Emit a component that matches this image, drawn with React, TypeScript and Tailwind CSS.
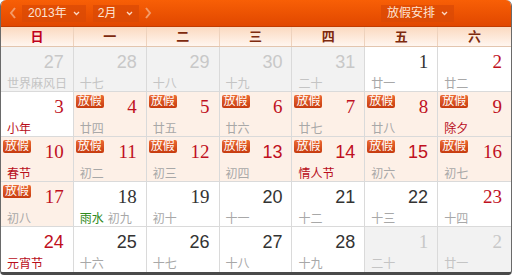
import React from 'react';

// Lunar calendar month view — Feb 2013 with holiday markers.

type Cell = {
  d: number;
  lunar: string;
  other?: boolean;   // outside current month
  holiday?: boolean; // 放假 badge + peach bg
  red?: boolean;     // weekend / holiday number colour
  fest?: boolean;    // lunar text shown as festival (red)
  term?: string;     // solar term (green)
  serif?: boolean;
};

const ROWS: Cell[][] = [
  [
    { d: 27, lunar: '世界麻风日', other: true },
    { d: 28, lunar: '十七', other: true },
    { d: 29, lunar: '十八', other: true },
    { d: 30, lunar: '十九', other: true },
    { d: 31, lunar: '二十', other: true },
    { d: 1, lunar: '廿一', serif: true },
    { d: 2, lunar: '廿二', red: true, serif: true },
  ],
  [
    { d: 3, lunar: '小年', red: true, fest: true, serif: true },
    { d: 4, lunar: '廿四', holiday: true, red: true, serif: true },
    { d: 5, lunar: '廿五', holiday: true, red: true, serif: true },
    { d: 6, lunar: '廿六', holiday: true, red: true, serif: true },
    { d: 7, lunar: '廿七', holiday: true, red: true, serif: true },
    { d: 8, lunar: '廿八', holiday: true, red: true, serif: true },
    { d: 9, lunar: '除夕', holiday: true, red: true, fest: true, serif: true },
  ],
  [
    { d: 10, lunar: '春节', holiday: true, red: true, fest: true, serif: true },
    { d: 11, lunar: '初二', holiday: true, red: true, serif: true },
    { d: 12, lunar: '初三', holiday: true, red: true, serif: true },
    { d: 13, lunar: '初四', holiday: true, red: true },
    { d: 14, lunar: '情人节', holiday: true, red: true, fest: true },
    { d: 15, lunar: '初六', holiday: true, red: true },
    { d: 16, lunar: '初七', holiday: true, red: true, serif: true },
  ],
  [
    { d: 17, lunar: '初八', holiday: true, red: true, serif: true },
    { d: 18, lunar: '初九', term: '雨水', serif: true },
    { d: 19, lunar: '初十', serif: true },
    { d: 20, lunar: '十一' },
    { d: 21, lunar: '十二' },
    { d: 22, lunar: '十三' },
    { d: 23, lunar: '十四', red: true, serif: true },
  ],
  [
    { d: 24, lunar: '元宵节', red: true, fest: true },
    { d: 25, lunar: '十六' },
    { d: 26, lunar: '十七' },
    { d: 27, lunar: '十八' },
    { d: 28, lunar: '十九' },
    { d: 1, lunar: '二十', other: true, serif: true },
    { d: 2, lunar: '廿一', other: true, serif: true },
  ],
];

const WEEK = ['日', '一', '二', '三', '四', '五', '六'];

const Chevron: React.FC = () => (
  <svg width="7" height="5" viewBox="0 0 7 5" className="ml-[6px] shrink-0">
    <path d="M1 1 L3.5 3.5 L6 1" fill="none" stroke="#fcd9c4" strokeWidth="1.3" />
  </svg>
);

const Arrow: React.FC<{ left?: boolean }> = ({ left }) => (
  <svg width="8" height="12" viewBox="0 0 8 12" className="shrink-0">
    <path d={left ? 'M6 1 L2 6 L6 11' : 'M2 1 L6 6 L2 11'} fill="none" stroke="#f39a68" strokeWidth="2" />
  </svg>
);

const Dropdown: React.FC<{ label: string; className?: string }> = ({ label, className = '' }) => (
  <div className={`h-[17px] flex items-center whitespace-nowrap bg-[#d94806]/70 text-[12px] leading-none text-[#fde3d2] ${className}`}>
    {label}
    <Chevron />
  </div>
);

const DayCell: React.FC<{ c: Cell; last: boolean; bottom: boolean }> = ({ c, last, bottom }) => {
  const bg = c.other ? 'bg-[#f2f2f2]' : c.holiday ? 'bg-[#fdf0e7]' : 'bg-white';
  const num = c.other ? 'text-[#c8c8c8]' : c.red ? 'text-[#c0101e]' : 'text-[#333333]';
  const face = c.serif ? 'font-["Liberation_Serif",serif] text-[19px]' : 'text-[18px]';
  const lunarColor = c.other ? 'text-[#c4c4c4]' : c.fest ? 'text-[#b80d1a]' : 'text-[#a8a8a8]';
  return (
    <div className={`relative h-[45px] ${bg} ${last ? '' : 'border-r border-[#dadada]'} ${bottom ? '' : 'border-b border-[#dadada]'}`}>
      {c.holiday && (
        <span className="absolute top-[3px] left-[2px] h-[13px] px-[2px] rounded-[2px] bg-gradient-to-b from-[#ec6a32] to-[#c63a0e] text-white text-[12px] leading-[13px]">
          放假
        </span>
      )}
      <div className={`flex justify-end pr-[9px] pt-[5px] leading-[20px] ${num} ${face}`}>{c.d}</div>
      <div className={`pl-[6px] mt-[4px] text-[12px] leading-[16px] whitespace-nowrap ${lunarColor}`}>
        {c.term && <span className="text-[#2f8a1c] mr-[4px]">{c.term}</span>}
        {c.lunar}
      </div>
    </div>
  );
};

export default function App() {
  return (
    <div className="w-[512px] h-[275px] bg-white font-['Liberation_Sans','Noto_Sans_CJK_SC',sans-serif]">
      <div className="w-[512px] h-[275px] rounded-t-[6px] rounded-b-[4px] overflow-hidden border-x border-[#6a6a6a] border-b-[3px] border-b-[#4a4a4a]">
        {/* top bar */}
        <div className="h-[27px] flex items-center bg-gradient-to-b from-[#f85f06] to-[#e14700] border-b border-[#c23b00] pl-[8px] pr-[57px]">
          <Arrow left />
          <Dropdown label="2013年" className="ml-[5px] pl-[6px] pr-[6px]" />
          <Dropdown label="2月" className="ml-[7px] pl-[5px] pr-[6px] w-[46px] justify-between" />
          <div className="ml-[5px]"><Arrow /></div>
          <Dropdown label="放假安排" className="ml-auto pl-[6px] pr-[6px]" />
        </div>
        {/* week header */}
        <div className="grid grid-cols-7 h-[20px] bg-gradient-to-b from-[#fbd9c0] to-[#fff6ef] border-b border-[#e3c5ae]">
          {WEEK.map((w, i) => (
            <div
              key={w}
              className={`flex items-center justify-center text-[13px] font-bold leading-none ${i === 0 ? 'text-[#c0001a]' : 'text-[#7e2a0e]'} ${i < 6 ? 'border-r border-[#eed2bd]' : ''}`}
            >
              {w}
            </div>
          ))}
        </div>
        {/* days */}
        <div className="grid grid-cols-7">
          {ROWS.map((row, r) =>
            row.map((c, i) => <DayCell key={`${r}-${i}`} c={c} last={i === 6} bottom={r === ROWS.length - 1} />)
          )}
        </div>
      </div>
    </div>
  );
}
